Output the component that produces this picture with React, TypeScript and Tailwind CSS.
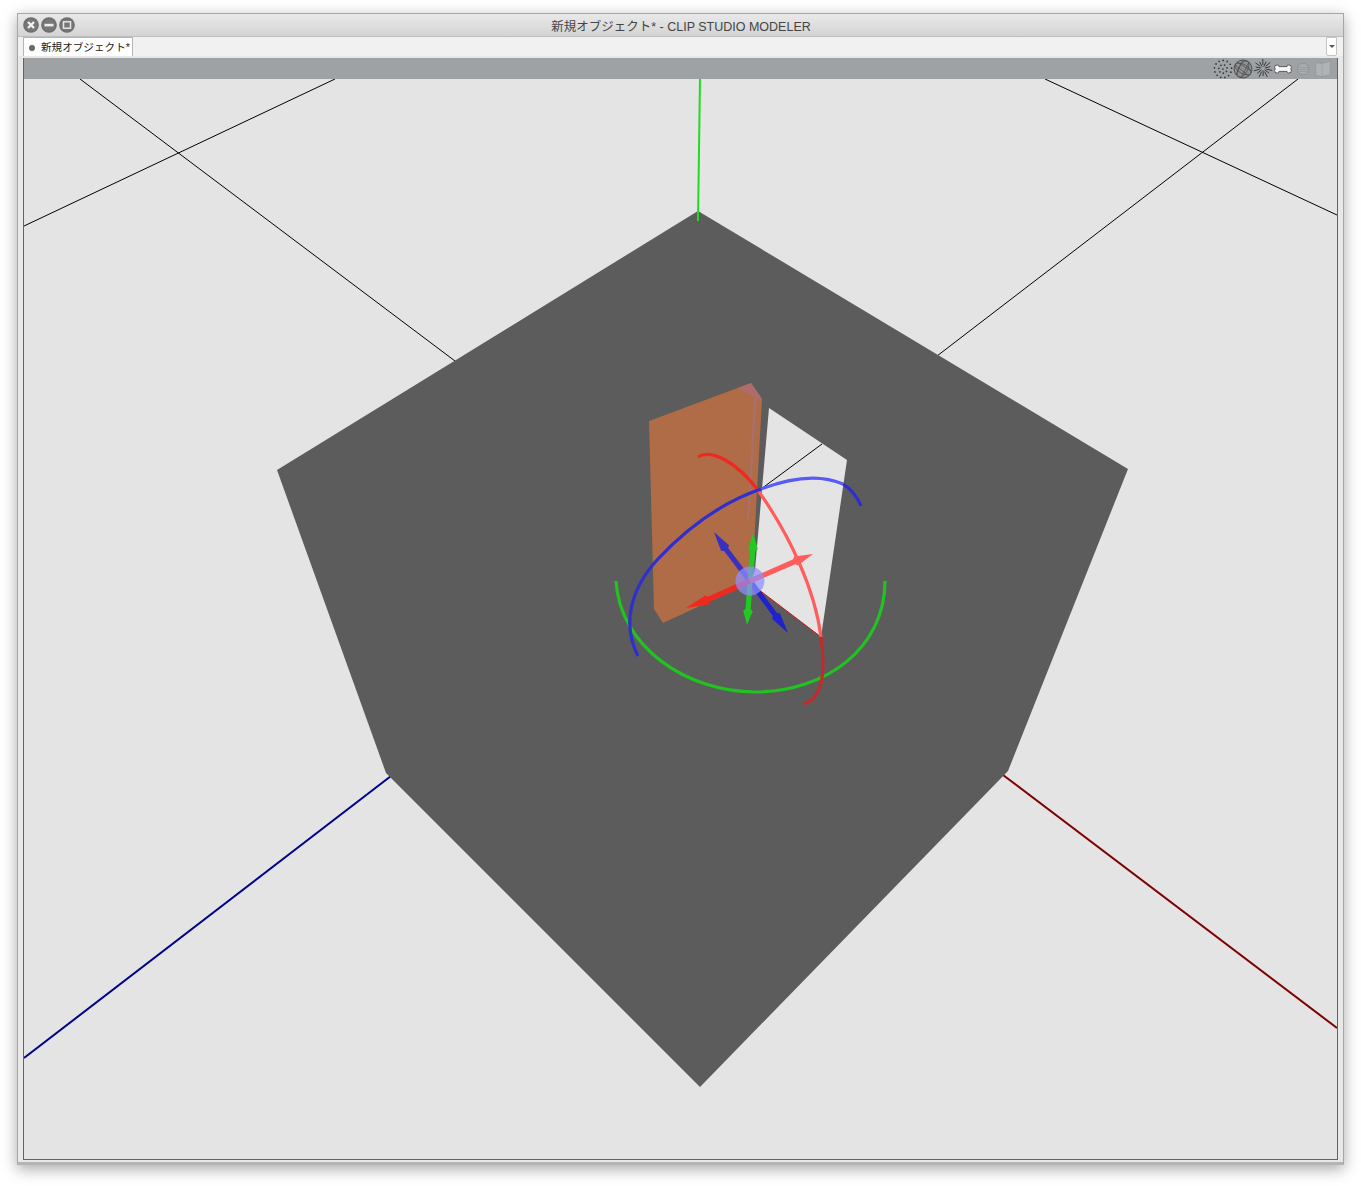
import React from "react";

// gizmo arrow: shaft from a to the head, head is a long diamond ending in the tip
function Arrow({ from, head, tip, color }: { from: number[]; head: number[]; tip: number[]; color: string }) {
    const dx = tip[0] - head[0];
    const dy = tip[1] - head[1];
    const len = Math.hypot(dx, dy);
    const nx = (-dy / len) * 4.8;
    const ny = (dx / len) * 4.8;
    const back = [head[0] - (dx / len) * 4, head[1] - (dy / len) * 4];
    const points = `${back[0]},${back[1]} ${head[0] + nx},${head[1] + ny} ${tip[0]},${tip[1]} ${head[0] - nx},${head[1] - ny}`;
    return (
        <g>
            <line x1={from[0]} y1={from[1]} x2={head[0]} y2={head[1]} stroke={color} strokeWidth="5.2" />
            <polygon points={points} fill={color} />
        </g>
    );
}

function WindowButton({ kind }: { kind: "close" | "min" | "max" }) {
    return (
        <svg width="16" height="16" viewBox="0 0 16 16">
            <circle cx="8" cy="8" r="7.8" fill="#6b6b6b" />
            <circle cx="8" cy="8" r="6.6" fill="#777777" />
            {kind === "close" && <path d="M5 5 L11 11 M11 5 L5 11" stroke="#f2f2f2" strokeWidth="2.4" />}
            {kind === "min" && <rect x="3.5" y="6.8" width="9" height="2.6" fill="#ededed" />}
            {kind === "max" && <rect x="4.5" y="4.8" width="7" height="6.4" fill="none" stroke="#e6e6e6" strokeWidth="1.5" />}
        </svg>
    );
}

function ToolIcons() {
    // dots sit on rings so the cloud reads as a sphere
    const dots: number[][] = [[10, 10]];
    [
        [4.2, 7],
        [8.6, 13],
    ].forEach(([r, n]) => {
        for (let i = 0; i < n; i++) {
            const a = (i / n) * Math.PI * 2 + r;
            dots.push([10 + Math.cos(a) * r, 10 + Math.sin(a) * r]);
        }
    });
    const spikes = Array.from({ length: 14 }, (_, i) => (i * Math.PI) / 7 + 0.2);
    return (
        <div className="flex items-center pr-[4px]">
            {/* points */}
            <svg width="20" height="20" viewBox="0 0 20 20">
                {dots.map((d, i) => (
                    <circle key={i} cx={d[0]} cy={d[1]} r="0.85" fill="#333" />
                ))}
            </svg>
            {/* wireframe */}
            <svg width="20" height="20" viewBox="0 0 20 20" fill="none" stroke="#4a4a4a" strokeWidth="0.7">
                <circle cx="10" cy="10" r="9" fill="#8f9295" strokeWidth="0.9" />
                <ellipse cx="10" cy="10" rx="4.5" ry="9" transform="rotate(30 10 10)" />
                <ellipse cx="10" cy="10" rx="9" ry="4.5" transform="rotate(30 10 10)" />
                <path d="M2 6 L16 17 M4 3 L18 12 M10 1 L3 16 M16 3 L8 19" />
            </svg>
            {/* burst */}
            <svg width="20" height="20" viewBox="0 0 20 20" stroke="#2e2e2e" strokeWidth="0.9">
                {spikes.map((a, i) => (
                    <line
                        key={i}
                        x1={10 + Math.cos(a) * (i % 2 ? 2 : 3.5)}
                        y1={9.5 + Math.sin(a) * (i % 2 ? 2 : 3.5)}
                        x2={10 + Math.cos(a) * (i % 2 ? 7.5 : 9.5)}
                        y2={9.5 + Math.sin(a) * (i % 2 ? 7.5 : 9.5)}
                    />
                ))}
            </svg>
            {/* bone */}
            <svg width="20" height="20" viewBox="0 0 20 20">
                <path
                    d="M4.5 6 Q6 6 6 7.6 L14 7.6 Q14 6 15.5 6 Q18.8 6 18.4 8.4 L17.8 10 L18.4 11.6 Q18.8 14 15.5 14 Q14 14 14 12.4 L6 12.4 Q6 14 4.5 14 Q1.2 14 1.6 11.6 L2.2 10 L1.6 8.4 Q1.2 6 4.5 6 Z"
                    fill="#f6f6f6"
                    stroke="#3f3f3f"
                    strokeWidth="0.8"
                />
            </svg>
            {/* solid, faded */}
            <svg width="20" height="20" viewBox="0 0 20 20">
                <circle cx="10" cy="10" r="5.8" fill="#a9acae" stroke="#8e9193" strokeWidth="0.8" />
                <path d="M5 8.5 H15 M4.8 10.5 H15.2 M5.5 12.5 H14.5" stroke="#94979a" strokeWidth="0.7" />
            </svg>
            {/* texture, faded */}
            <svg width="20" height="20" viewBox="0 0 20 20">
                <path d="M2.5 3.5 L9 4.5 L17.5 2 L17 16 L9 17.5 L3 16.5 Z" fill="#b0b3b5" stroke="#95989a" strokeWidth="0.8" />
                <path d="M9 4.5 L9 17.5" stroke="#a0a3a5" strokeWidth="0.8" />
            </svg>
        </div>
    );
}

function Viewport() {
    const c = [750, 581];
    return (
        <svg className="block w-full flex-1" viewBox="24 79 1313 1080" preserveAspectRatio="none">
            <rect x="24" y="79" width="1313" height="1080" fill="#e4e4e4" />

            {/* grid */}
            <g stroke="#000" strokeWidth="1">
                <line x1="80" y1="79" x2="455" y2="361" />
                <line x1="335" y1="79" x2="24" y2="226" />
                <line x1="1045" y1="79" x2="1337" y2="215" />
                <line x1="1298" y1="79" x2="937" y2="356" />
            </g>
            <line x1="700" y1="79" x2="698" y2="221" stroke="#1fdc1f" strokeWidth="2" />
            <line x1="391" y1="776" x2="24" y2="1058" stroke="#00008a" strokeWidth="2" />
            <line x1="1003" y1="775" x2="1337" y2="1028" stroke="#7d0000" strokeWidth="2" />

            {/* floor box */}
            <polygon points="698,211 1128,469 1008,771 700,1087 386,773 277,470" fill="#5c5c5c" />
            <line x1="698" y1="211" x2="698" y2="221" stroke="#1fdc1f" strokeWidth="2" />

            {/* white plane */}
            <polygon points="769,408 847,460 821,637 750,583 755,570" fill="#e4e4e4" />
            <line x1="822" y1="444" x2="761" y2="489" stroke="#000" strokeWidth="1" />
            <line x1="750" y1="583" x2="821" y2="637" stroke="#d01010" strokeWidth="1" />

            {/* orange plane */}
            <polygon points="649,421 751,383 762,399 752,582 663,623 654,609" fill="#b06b47" />
            <polygon points="738,388 751,383 762,399 756,398" fill="#ae6d6c" />
            <polygon points="754,398 757,398 749,520 747,520" fill="#ab6f6a" />

            {/* rings */}
            <g fill="none" strokeWidth="3.2">
                <path d="M616 581 C 620 648 688 692 755 692 C 826 692 885 648 885 581" stroke="#21c321" />
                <path d="M698 457 C 712 448 738 464 757 489" stroke="#ee2a20" />
                <path d="M757 489 C 790 535 815 590 821 637" stroke="#ff5c5c" />
                <path d="M821 637 C 826 675 822 698 804 704" stroke="#c42a2a" />
                <path d="M638 656 C 622 625 630 590 657 560 C 685 530 720 503 761 489" stroke="#2f2fcf" />
                <path d="M761 489 C 790 478 820 474 843 484" stroke="#5a5af6" />
                <path d="M843 484 C 851 489 857 496 861 506" stroke="#2c2cd0" />
            </g>

            {/* move gizmo */}
            <Arrow from={c} head={[725, 548]} tip={[714, 532]} color="#3a30c0" />
            <Arrow from={c} head={[776, 616]} tip={[788, 633]} color="#2222cc" />
            <Arrow from={c} head={[753, 549]} tip={[753, 533]} color="#22c922" />
            <Arrow from={c} head={[748, 611]} tip={[747, 625]} color="#22c922" />
            <Arrow from={c} head={[707, 600]} tip={[686, 608]} color="#ee2a20" />
            <Arrow from={c} head={[796, 561]} tip={[813, 554]} color="#ff5c5c" />
            <circle cx="750" cy="581" r="14.5" fill="#8f8fff" fillOpacity="0.72" />
        </svg>
    );
}

export default function App() {
    return (
        <div className="h-[1186px] w-[1361px] overflow-hidden bg-white pl-[17px] pt-[13px] font-['Liberation_Sans','Noto_Sans_CJK_JP',sans-serif]">
            <div className="flex h-[1152px] w-[1327px] flex-col border border-[#a6a6a6] border-b-[3px] border-b-[#b4b4b4] bg-[#e8e8e8] pb-[2px] pl-[5px] pr-[5px] shadow-[0_4px_14px_rgba(0,0,0,0.35)]">
                {/* title bar */}
                <div className="-mx-[5px] flex h-[23px] shrink-0 items-center border-b border-[#bdbdbd] bg-gradient-to-b from-[#e9e9e9] to-[#d4d4d4] pl-[5px]">
                    <div className="flex gap-[2px]">
                        <WindowButton kind="close" />
                        <WindowButton kind="min" />
                        <WindowButton kind="max" />
                    </div>
                    <div className="flex-1 pr-[56px] pt-[4px] text-center text-[12.5px] text-[#444]">
                        新規オブジェクト* - CLIP STUDIO MODELER
                    </div>
                </div>

                {/* tabs */}
                <div className="-mx-[5px] flex h-[19px] shrink-0 items-stretch justify-between bg-[#f1f1f1] pl-[5px] pr-[6px]">
                    <div className="flex w-[110px] items-center whitespace-nowrap border border-b-0 border-[#b5b5b5] bg-white pl-[5px] pt-[1px] text-[10.6px] text-[#222]">
                        <span className="mr-[6px] h-[6px] w-[6px] shrink-0 rounded-full bg-[#666]" />
                        新規オブジェクト*
                    </div>
                    <div className="flex w-[11px] items-center justify-center rounded-b-[2px] border border-[#c4c4c4] bg-white">
                        <span className="h-0 w-0 border-x-[3px] border-t-[3px] border-x-transparent border-t-[#555]" />
                    </div>
                </div>

                {/* viewport */}
                <div className="mt-[2px] flex min-h-0 flex-1 flex-col border border-t-0 border-[#5f6266]">
                    <div className="flex h-[21px] shrink-0 items-center justify-end bg-[#9fa2a5]">
                        <ToolIcons />
                    </div>
                    <Viewport />
                </div>
            </div>
        </div>
    );
}
